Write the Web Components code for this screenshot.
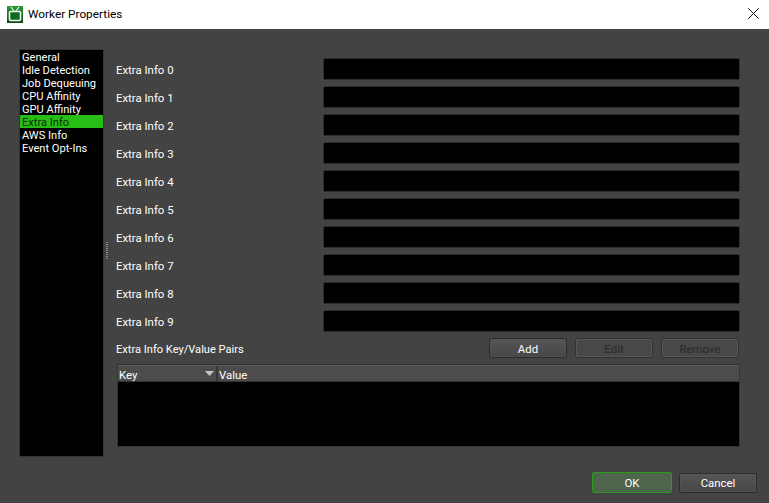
<!DOCTYPE html>
<html><head><meta charset="utf-8"><style>
html,body{margin:0;padding:0;background:#434343}
body{width:769px;height:503px;overflow:hidden;font:11.4px/13px Roboto,"Open Sans",sans-serif;color:#fff}
</style></head><body>
<x-dialog></x-dialog>
<script>
const def=(n,html)=>customElements.define(n,class extends HTMLElement{connectedCallback(){if(this.shadowRoot)return;const r=this.attachShadow({mode:'open'});r.innerHTML=html;}});
def('x-titlebar',`<style>:host{display:flex;align-items:center;height:29px;background:#fff;color:#000;font:11.8px Roboto,sans-serif}
.i{margin-left:7px;width:16px;height:17px;display:block}.t{margin-left:5px;flex:1;padding-bottom:1px}.x{width:11px;height:11px;margin-right:10px;margin-bottom:3px;display:block}</style>
<svg class="i" viewBox="0 0 16 17"><defs><linearGradient id="g" x1="0" y1="0" x2="0" y2="1"><stop offset="0" stop-color="#2f9a36"/><stop offset="1" stop-color="#0d4a17"/></linearGradient></defs><rect width="16" height="17" fill="url(#g)"/><path d="M4 1l3 4M12 1L9 5" stroke="#e8f5e4" stroke-width="1.2" fill="none"/><rect x="2.5" y="5.5" width="11" height="9" rx="1" fill="#0f6a22" stroke="#eef7ea" stroke-width="1.6"/></svg>
<span class="t"><slot></slot></span>
<svg class="x" viewBox="0 0 11 11"><path d="M.3.3l10.4 10.4M10.7.3L.3 10.7" stroke="#111" stroke-width="1" fill="none"/></svg>`);
def('x-nav',`<style>:host{display:block;box-sizing:border-box;width:85px;height:408px;background:#000;border:1px solid #353535;font-size:11.1px}</style><slot></slot>`);
def('x-nav-item',`<style>:host{display:block;height:13px;line-height:15px;padding-left:2px;white-space:nowrap;color:#fff}
:host([sel]){background:#27bd14;color:#0e2a0a}</style><slot></slot>`);
def('x-split',`<style>:host{display:flex;width:12px;height:408px;align-items:center;padding-left:2px;box-sizing:border-box}
i{display:block;width:2px;height:18px;background:repeating-linear-gradient(#8a8a8a 0 1px,transparent 1px 2px);margin-top:-5px}</style><i></i>`);
def('x-field',`<style>:host{display:flex;align-items:center;height:22px;margin-bottom:6px}
.l{width:207px;padding-top:2px;box-sizing:border-box}.f{width:417px;box-sizing:border-box;height:22px;background:#000;border:1px solid #2f2f2f;border-radius:2px}</style>
<span class="l"><slot></slot></span><span class="f"></span>`);
def('x-btn',`<style>:host{display:inline-flex;align-items:center;justify-content:center;box-sizing:border-box;width:78px;height:20px;border:1px solid #2c2c2c;border-radius:2px;background:linear-gradient(#555,#474747);box-shadow:inset 0 0 0 1px #5e5e5e55;color:#fff;padding-top:2px}
:host([disabled]){color:#2a2a2a;background:#484848;border-color:#333;box-shadow:inset 0 0 0 1px #555}
:host([primary]){width:80px;height:21px;border:1px solid #2c9a1f;background:#4d644d;box-shadow:none}
</style><slot></slot>`);
def('x-table',`<style>:host{display:block;box-sizing:border-box;width:623px;height:83px;background:#000;border:1px solid #333;margin-left:1px}
.h{display:flex;height:17px;box-sizing:border-box;background:#4c4c4c;border-top:1px solid #5a5a5a;border-bottom:1px solid #333}
.k{border-right:2px solid #383838;padding-left:1px;display:flex;justify-content:space-between;align-items:center;box-sizing:border-box;width:100px;height:15px}
.k span{padding-top:4px}.k svg{width:9px;height:5px;margin-right:2px}.v{padding:3px 0 0 1px}</style>
<div class="h"><div class="k"><span>Key</span><svg viewBox="0 0 9 5"><path d="M0 0h9L4.5 5z" fill="#c8c8c8"/></svg></div><div class="v">Value</div></div>`);
def('x-dialog',`<style>:host{display:flex;flex-direction:column;width:769px;height:503px;background:#434343}
.m{display:flex;padding:20px 0 0 19px}.c{margin-top:9px}
.kv{display:flex;align-items:center;height:20px;margin:1px 0 6px;width:623px}.kv span{flex:1;font-size:11.1px;padding-top:2px}.kv x-btn+x-btn{margin-left:8px}
.f{display:flex;justify-content:flex-end;align-items:center;gap:7px;padding:15px 12px 0 0}</style>
<x-titlebar>Worker Properties</x-titlebar>
<div class="m"><x-nav><x-nav-item>General</x-nav-item><x-nav-item>Idle Detection</x-nav-item><x-nav-item>Job Dequeuing</x-nav-item><x-nav-item>CPU Affinity</x-nav-item><x-nav-item>GPU Affinity</x-nav-item><x-nav-item sel>Extra Info</x-nav-item><x-nav-item>AWS Info</x-nav-item><x-nav-item>Event Opt-Ins</x-nav-item></x-nav><x-split></x-split>
<div class="c">${[0,1,2,3,4,5,6,7,8,9].map(i=>`<x-field>Extra Info ${i}</x-field>`).join('')}
<div class="kv"><span>Extra Info Key/Value Pairs</span><x-btn>Add</x-btn><x-btn disabled>Edit</x-btn><x-btn disabled>Remove</x-btn></div><x-table></x-table></div></div>
<div class="f"><x-btn primary>OK</x-btn><x-btn>Cancel</x-btn></div>`);
</script></body></html>
